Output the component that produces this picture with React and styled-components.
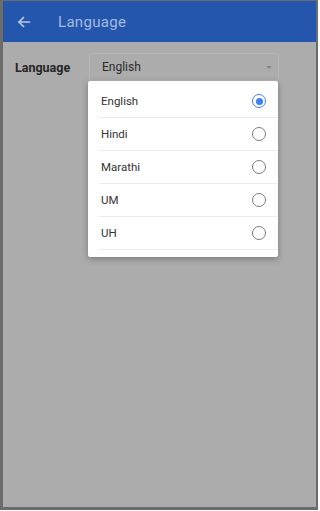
import React from 'react';
import styled, { createGlobalStyle } from 'styled-components';

const GlobalStyle = createGlobalStyle`
  html, body {
    margin: 0;
    padding: 0;
    background: #ffffff;
  }
  body {
    font-family: Roboto, "Liberation Sans", Arial, sans-serif;
  }
`;

const Frame = styled.div`
  box-sizing: border-box;
  width: 318px;
  height: 510px;
  border: 2px solid #6c6c6c;
  border-top-width: 1px;
  border-left-width: 3px;
  border-bottom-width: 3px;
  background: #acacac;
  display: flex;
  flex-direction: column;
`;

const Header = styled.div`
  height: 41px;
  background: #2456ad;
  display: flex;
  align-items: center;
  padding-left: 14px;
  gap: 27px;
`;

const BackIcon = styled.svg`
  width: 14px;
  height: 14px;
  display: block;
`;

const Title = styled.div`
  color: #a5bbe0;
  font-size: 15px;
  letter-spacing: 0.3px;
`;

const Body = styled.div`
  flex: 1;
  padding: 11px 37px 0 12px;
`;

const Row = styled.div`
  display: flex;
  align-items: center;
  gap: 15px;
`;

const Label = styled.div`
  width: 59px;
  font-size: 12.5px;
  font-weight: 700;
  color: #262626;
`;

const SelectWrap = styled.div`
  position: relative;
  flex: 1;
`;

const SelectBox = styled.div`
  box-sizing: border-box;
  height: 28px;
  border: 1px solid #b6b6b6;
  border-radius: 2px;
  display: flex;
  align-items: center;
  justify-content: space-between;
  padding: 0 6px 0 12px;
  font-size: 12px;
  color: #2b2b2b;
`;

const Caret = styled.span`
  width: 0;
  height: 0;
  border-left: 3px solid transparent;
  border-right: 3px solid transparent;
  border-top: 3px solid #858585;
`;

const Menu = styled.div`
  position: absolute;
  top: 28px;
  left: -1px;
  right: 1px;
  background: #ffffff;
  border-radius: 2px;
  box-shadow: 0 2px 6px rgba(0, 0, 0, 0.3);
  padding: 4px 0 7px 0;
`;

const Option = styled.div`
  margin-left: 11px;
  height: 33px;
  box-sizing: border-box;
  border-bottom: 1px solid #ececec;
  display: flex;
  align-items: center;
  justify-content: space-between;
  padding: 0 12px 0 2px;
  font-size: 11.5px;
  color: #333333;
`;

const Radio = styled.span`
  box-sizing: border-box;
  width: 14px;
  height: 14px;
  border-radius: 50%;
  border: 1.5px solid ${p => (p.checked ? '#3d7ff5' : '#7c7c7c')};
  display: flex;
  align-items: center;
  justify-content: center;

  &::after {
    content: '';
    width: 7px;
    height: 7px;
    border-radius: 50%;
    background: ${p => (p.checked ? '#3d7ff5' : 'transparent')};
  }
`;

const languages = ['English', 'Hindi', 'Marathi', 'UM', 'UH'];

export default function App() {
  const selected = 'English';
  return (
    <>
      <GlobalStyle />
      <Frame>
        <Header>
          <BackIcon viewBox="0 0 14 14" fill="none" stroke="#b9c9e8" strokeWidth="1.7" strokeLinecap="round" strokeLinejoin="round">
            <path d="M12.5 7H2" />
            <path d="M6.5 2.5L2 7l4.5 4.5" />
          </BackIcon>
          <Title>Language</Title>
        </Header>
        <Body>
          <Row>
            <Label>Language</Label>
            <SelectWrap>
              <SelectBox>
                <span>{selected}</span>
                <Caret />
              </SelectBox>
              <Menu>
                {languages.map(lang => (
                  <Option key={lang}>
                    <span>{lang}</span>
                    <Radio checked={lang === selected} />
                  </Option>
                ))}
              </Menu>
            </SelectWrap>
          </Row>
        </Body>
      </Frame>
    </>
  );
}
